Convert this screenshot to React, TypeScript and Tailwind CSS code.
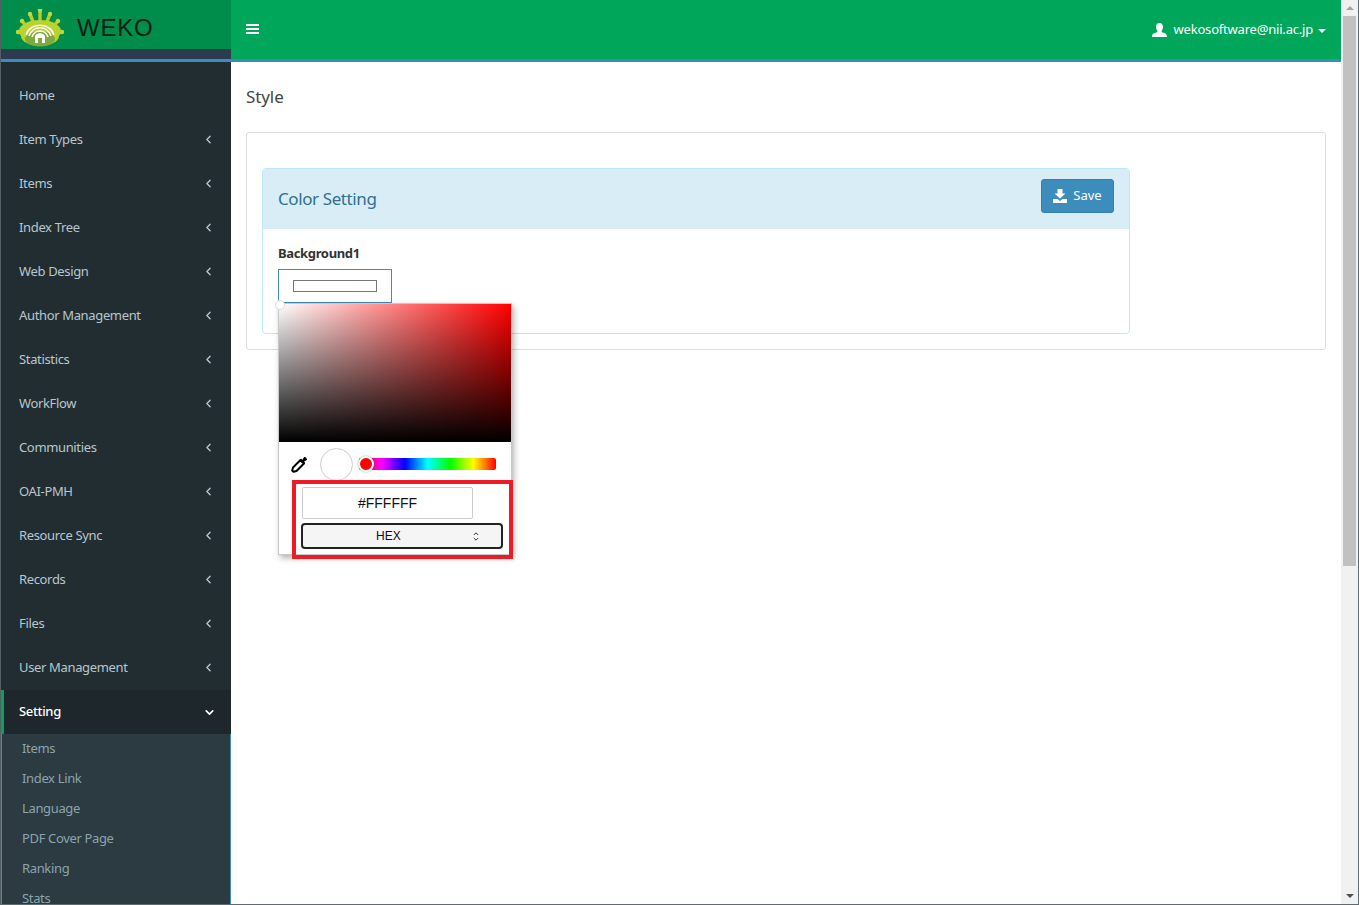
import { ChevronDown, ChevronLeft } from "lucide-react";

const menuItems = [
  { label: "Home", arrow: false },
  { label: "Item Types", arrow: true },
  { label: "Items", arrow: true },
  { label: "Index Tree", arrow: true },
  { label: "Web Design", arrow: true },
  { label: "Author Management", arrow: true },
  { label: "Statistics", arrow: true },
  { label: "WorkFlow", arrow: true },
  { label: "Communities", arrow: true },
  { label: "OAI-PMH", arrow: true },
  { label: "Resource Sync", arrow: true },
  { label: "Records", arrow: true },
  { label: "Files", arrow: true },
  { label: "User Management", arrow: true },
];

const settingItems = ["Items", "Index Link", "Language", "PDF Cover Page", "Ranking", "Stats"];

function Logo() {
  const spikes = [
    [3, 23, 9, 25],
    [7, 12, 13, 19],
    [15, 5, 19, 15],
    [25, 1, 25, 13],
    [35, 5, 31, 15],
    [43, 12, 37, 19],
    [47, 23, 41, 25],
  ];
  return (
    <svg width="50" height="38" viewBox="0 0 50 38" className="shrink-0">
      {spikes.map(([x1, y1, x2, y2]) => (
        <g key={x1}>
          <line x1={x1} y1={y1} x2={x2} y2={y2} stroke="#b5cf2a" strokeWidth="3.4" />
          <circle cx={x1} cy={y1} r="2.2" fill="#c2d73a" />
        </g>
      ))}
      <ellipse cx="25" cy="22" rx="21" ry="11" fill="#b9d22e" />
      <ellipse cx="25" cy="27" rx="19" ry="10" fill="#b9d22e" />
      <ellipse cx="25" cy="30" rx="15" ry="7.5" fill="#7faa3c" />
      <path d="M11 26 C15 13 35 13 39 26" fill="none" stroke="#ffffff" strokeWidth="1.6" />
      <path d="M14 27 C18 16 32 16 36 27" fill="none" stroke="#ffffff" strokeWidth="1.6" />
      <path d="M17 28 C20 20 30 20 33 28" fill="none" stroke="#ffffff" strokeWidth="1.6" />
      <path d="M20 34 V28 C20 23 30 23 30 28 V34 H27 V29 H23 V34 Z" fill="#ffffff" />
    </svg>
  );
}

function UserIcon() {
  return (
    <svg width="15" height="14" viewBox="0 0 15 14" fill="#ffffff">
      <path d="M7.5 0 C10 0 11 2 11 4 C11 6 10 7.2 9.6 8 C9.4 8.8 10 9.2 11.5 9.8 C13.5 10.5 15 11 15 14 H0 C0 11 1.5 10.5 3.5 9.8 C5 9.2 5.6 8.8 5.4 8 C5 7.2 4 6 4 4 C4 2 5 0 7.5 0 Z" />
    </svg>
  );
}

function SaveIcon() {
  return (
    <svg width="14" height="14" viewBox="0 0 14 14" fill="#ffffff">
      <path d="M4.5 0 H9.5 V4.5 H12.5 L7 9.5 L1.5 4.5 H4.5 Z" />
      <path d="M0 10 H4.5 L7 12 L9.5 10 H14 V14 H0 Z" />
    </svg>
  );
}

function Eyedropper() {
  return (
    <svg width="17" height="17" viewBox="0 0 17 17" className="shrink-0">
      <path d="M9.5 4 L13 7.5 L5.5 15 L2.5 15.8 L1.2 14.5 L2 11.5 Z" fill="#ffffff" stroke="#000000" strokeWidth="2" strokeLinejoin="round" />
      <path d="M8.4 4.4 L10 2.8 L11.2 4 L13 1.2 C14 0.2 16.8 3 15.8 4 L13 5.8 L14.2 7 L12.6 8.6 Z" fill="#000000" />
    </svg>
  );
}

function ColorPicker() {
  return (
    <div className="absolute left-0 top-[34px] z-10 w-[234px] border border-[#c8c8c8] bg-white shadow-[2px_3px_6px_rgba(0,0,0,0.3)]">
      <div className="relative h-[138px] bg-[linear-gradient(to_top,#000000,rgba(0,0,0,0)),linear-gradient(to_right,#ffffff,#ff0000)]">
        <div className="absolute -left-[4px] -top-[4px] h-[10px] w-[10px] rounded-full border border-[#dddddd] bg-white" />
      </div>
      <div className="flex h-[45px] items-center pl-[12px]">
        <Eyedropper />
        <div className="ml-[12px] h-[33px] w-[33px] shrink-0 rounded-full border border-[#cccccc] bg-white" />
        <div className="relative mb-[2px] ml-[6px] h-[12px] w-[137px] rounded-[2px] bg-[linear-gradient(to_right,#ff0000,#ff00ff,#0000ff,#00ffff,#00ff00,#ffff00,#ff0000)]">
          <div className="absolute -left-[1px] -top-[2px] h-[16px] w-[16px] rounded-full border-[2px] border-white bg-[#ff0000] shadow-[0_0_2px_rgba(0,0,0,0.4)]" />
        </div>
      </div>
      <div className="flex h-[67px] flex-col pl-[23px] pr-[8px]">
        <div className="flex h-[32px] w-[171px] items-center justify-center rounded-[2px] border border-[#cccccc] text-[14px] text-[#111111] [font-family:'Liberation_Sans',Arial,sans-serif]">
          #FFFFFF
        </div>
        <div className="ml-[-1px] mt-[4px] flex h-[26px] w-[202px] items-center rounded-[4px] border-2 border-[#222222] bg-[#f5f5f5] pl-[73px] text-[12px] text-[#111111] [font-family:'Liberation_Sans',Arial,sans-serif]">
          <span>HEX</span>
          <svg width="6" height="9" viewBox="0 0 6 9" className="ml-[72px]">
            <path d="M0.8 3 L3 0.8 L5.2 3 M0.8 6 L3 8.2 L5.2 6" fill="none" stroke="#333333" strokeWidth="1" />
          </svg>
        </div>
      </div>
      <div className="absolute left-[13px] top-[176px] h-[79px] w-[221px] border-[4px] border-[#ed1c24]" />
    </div>
  );
}

export default function App() {
  return (
    <div className="flex h-[905px] w-[1359px] overflow-hidden border-b border-r border-[#5f6b70] bg-white text-[14px] [font-family:'Noto_Sans','Open_Sans',sans-serif]">
      <aside className="flex w-[231px] shrink-0 flex-col border-l border-[#555f66] bg-[#222d32]">
        <div className="flex h-[49px] items-center bg-[#008d4c] pl-[14px] pt-[7px]">
          <Logo />
          <span className="ml-[12px] text-[24px] leading-none tracking-[0.8px] text-[#0a1f12] [font-family:'Liberation_Sans',Arial,sans-serif]">
            WEKO
          </span>
        </div>
        <div className="h-[10px] bg-[#2c3b4f]" />
        <div className="h-[3px] bg-[#3c8dbc]" />
        <nav className="flex min-h-0 flex-1 flex-col pt-[12px] text-[13px] tracking-[-0.35px]">
          {menuItems.map((item) => (
            <div key={item.label} className="flex h-[44px] shrink-0 items-center justify-between pl-[18px] pr-[16px] text-[#b8c7ce]">
              <span>{item.label}</span>
              {item.arrow && <ChevronLeft size={13} strokeWidth={2.5} className="mb-[2px]" />}
            </div>
          ))}
          <div className="flex h-[44px] shrink-0 items-center justify-between border-l-[3px] border-[#00a65a] bg-[#1e282c] pl-[15px] pr-[15px] font-medium text-white">
            <span>Setting</span>
            <ChevronDown size={13} strokeWidth={3} />
          </div>
          <div className="flex flex-1 flex-col overflow-hidden border-x border-[#3c8dbc] bg-[#2c3b41] pl-[20px] text-[#8aa4af]">
            {settingItems.map((item) => (
              <div key={item} className="flex h-[30px] shrink-0 items-center">
                {item}
              </div>
            ))}
          </div>
        </nav>
      </aside>

      <div className="flex w-[1110px] shrink-0 flex-col">
        <header className="flex h-[62px] shrink-0 items-center justify-between border-b-[3px] border-[#3c8dbc] bg-[#00a65a] pl-[15px] pr-[15px] pb-[2px] text-white">
          <div className="flex w-[13px] flex-col gap-[2px]">
            <div className="h-[2px] bg-white" />
            <div className="h-[2px] bg-white" />
            <div className="h-[2px] bg-white" />
          </div>
          <div className="mt-[2px] flex items-center text-[13px] tracking-[-0.2px]">
            <UserIcon />
            <span className="ml-[7px]">wekosoftware@nii.ac.jp</span>
            <span className="ml-[5px] mt-[2px] h-0 w-0 border-x-[4px] border-t-[4px] border-x-transparent border-t-white" />
          </div>
        </header>

        <main className="flex-1 px-[15px] pt-[24px]">
          <h1 className="text-[17px] leading-[22px] tracking-[-0.1px] text-[#444444]">Style</h1>
          <div className="mt-[24px] h-[218px] rounded-[3px] border border-[#dddddd] pl-[15px] pt-[35px]">
            <div className="h-[166px] w-[868px] rounded-[4px] border border-[#bce8f1]">
              <div className="flex h-[60px] items-center justify-between rounded-t-[3px] bg-[#d9edf7] pl-[15px] pr-[15px]">
                <span className="text-[17px] tracking-[-0.4px] text-[#31708f]">Color Setting</span>
                <button className="mb-[6px] flex h-[34px] w-[73px] items-center justify-center gap-[6px] rounded-[3px] border border-[#367fa9] bg-[#3c8dbc] text-[13px] text-white">
                  <SaveIcon />
                  Save
                </button>
              </div>
              <div className="pl-[15px] pt-[14px]">
                <div className="text-[13px] font-bold leading-[20px] tracking-[-0.35px] text-[#333333]">Background1</div>
                <div className="relative mt-[6px] w-[114px]">
                  <div className="flex h-[34px] w-[114px] items-center justify-center border border-[#3c8dbc] bg-white">
                    <div className="h-[12px] w-[84px] border border-[#777777] bg-white" />
                  </div>
                  <ColorPicker />
                </div>
              </div>
            </div>
          </div>
        </main>
      </div>

      <div className="flex w-[17px] shrink-0 flex-col items-center bg-[#f1f1f1]">
        <div className="flex h-[16px] w-full shrink-0 items-center justify-center">
          <span className="h-0 w-0 border-x-[4px] border-b-[4px] border-x-transparent border-b-[#a3a3a3]" />
        </div>
        <div className="h-[550px] w-[13px] shrink-0 bg-[#c1c1c1]" />
        <div className="flex-1" />
        <div className="flex h-[16px] w-full shrink-0 items-center justify-center">
          <span className="h-0 w-0 border-x-[4px] border-t-[4px] border-x-transparent border-t-[#505050]" />
        </div>
      </div>
    </div>
  );
}
